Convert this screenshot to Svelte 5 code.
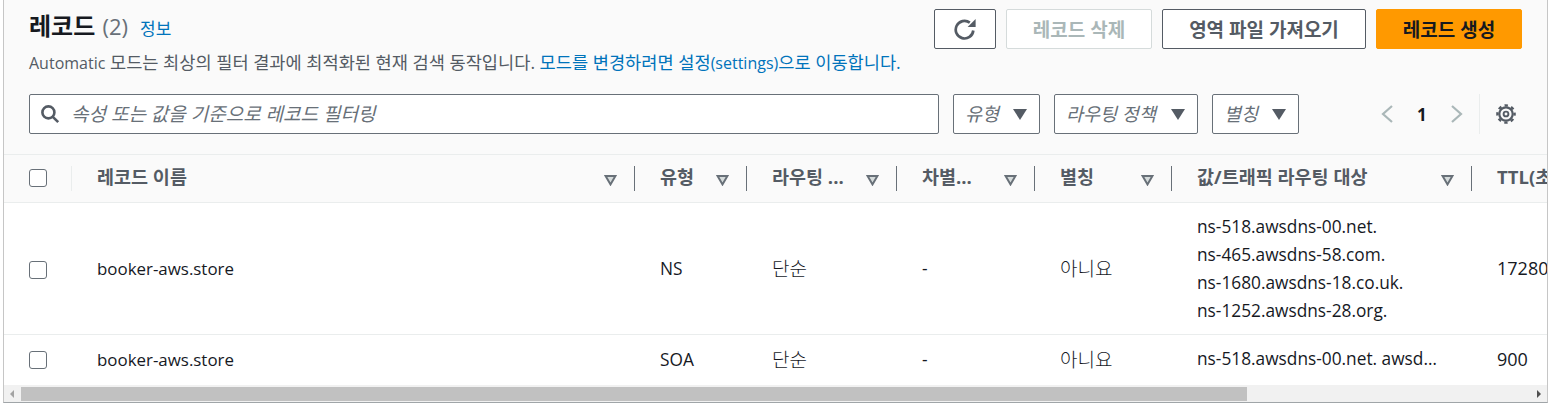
<script lang="ts">
	const filters = [
		{ label: '유형', width: 87 },
		{ label: '라우팅 정책', width: 144 },
		{ label: '별칭', width: 87 }
	];

	const columns = [
		{ label: '레코드 이름', width: 563 },
		{ label: '유형', width: 112 },
		{ label: '라우팅 ...', width: 150 },
		{ label: '차별...', width: 138 },
		{ label: '별칭', width: 137 },
		{ label: '값/트래픽 라우팅 대상', width: 300 },
		{ label: 'TTL(초)', width: 120, noSort: true }
	];

	const records = [
		{
			name: 'booker-aws.store',
			type: 'NS',
			routing: '단순',
			diff: '-',
			alias: '아니요',
			values: ['ns-518.awsdns-00.net.', 'ns-465.awsdns-58.com.', 'ns-1680.awsdns-18.co.uk.', 'ns-1252.awsdns-28.org.'],
			ttl: '172800'
		},
		{
			name: 'booker-aws.store',
			type: 'SOA',
			routing: '단순',
			diff: '-',
			alias: '아니요',
			values: ['ns-518.awsdns-00.net. awsdns-hostmaster.amazon.com. 1 7200 900'],
			ttl: '900'
		}
	];
</script>

<div class="page">
	<div class="panel">
		<header class="head">
			<div class="head-top">
				<div class="title-line">
					<h2>레코드 <span class="count">(2)</span></h2>
					<span class="info">정보</span>
				</div>
				<div class="actions">
					<button class="btn icon-btn" aria-label="새로 고침">
						<svg width="22" height="22" viewBox="0 0 22 22" fill="none" stroke="#545b64" stroke-width="2.7">
							<path d="M15.8 4.6A8.8 8.8 0 1 0 19.3 12.5" />
							<path d="M13.6 9h8V1z" fill="#545b64" stroke="none" />
						</svg>
					</button>
					<button class="btn disabled">레코드 삭제</button>
					<button class="btn import">영역 파일 가져오기</button>
					<button class="btn primary">레코드 생성</button>
				</div>
			</div>
			<p class="desc">
				<span class="lat">Automatic</span> 모드는 최상의 필터 결과에 최적화된 현재 검색 동작입니다. <span class="link">모드를 변경하려면 설정<span class="lat">(settings)</span>으로 이동합니다.</span>
			</p>
			<div class="tools">
				<div class="search">
					<svg width="20" height="20" viewBox="0 0 20 20" fill="none" stroke="#545b64" stroke-width="2.6">
						<circle cx="8.4" cy="8.4" r="6" />
						<path d="M12.8 12.8l5.4 5.4" />
					</svg>
					<span>속성 또는 값을 기준으로 레코드 필터링</span>
				</div>
				<div class="filters">
					{#each filters as f}
						<div class="filter" style="width: {f.width}px">
							<span>{f.label}</span>
							<i class="caret"></i>
						</div>
					{/each}
				</div>
				<div class="pager">
					<svg width="14" height="20" viewBox="0 0 14 20" fill="none" stroke="#aab7b8" stroke-width="2.2"><path d="M12 2L3 10l9 8" /></svg>
					<b>1</b>
					<svg width="14" height="20" viewBox="0 0 14 20" fill="none" stroke="#aab7b8" stroke-width="2.2"><path d="M2 2l9 8-9 8" /></svg>
				</div>
				<div class="prefs">
					<svg width="22" height="22" viewBox="0 0 22 22" fill="none" stroke="#545b64">
						<circle cx="11" cy="11" r="6.7" stroke-width="2.2" />
						<circle cx="11" cy="11" r="2.4" stroke-width="1.9" />
						<circle cx="11" cy="11" r="8.6" stroke-width="2.4" stroke-dasharray="3.35 3.4" stroke-dashoffset="1.67" />
					</svg>
				</div>
			</div>
		</header>

		<div class="table-wrap">
			<table>
				<thead>
					<tr>
						<th class="check-col"><span class="box"></span></th>
						{#each columns as col, i}
							<th style="width: {col.width}px">
								<div class="th-in" class:first={i === 0}>
									<span>{col.label}</span>
									{#if !col.noSort}
										<svg class="sort" width="13" height="11" viewBox="0 0 13 11" fill="#d5dbdb" stroke="#687078" stroke-width="2">
											<path d="M1.6 1h9.8L6.5 9.4z" />
										</svg>
									{/if}
								</div>
							</th>
						{/each}
					</tr>
				</thead>
				<tbody>
					{#each records as r}
						<tr>
							<td class="check-col"><span class="box"></span></td>
							<td class="lat-cell">{r.name}</td>
							<td class="lat-cell type">{r.type}</td>
							<td class="ko-cell">{r.routing}</td>
							<td class="lat-cell">{r.diff}</td>
							<td class="ko-cell">{r.alias}</td>
							<td class="lat-cell values">
								{#each r.values as v}
									<div class="value">{v}</div>
								{/each}
							</td>
							<td class="lat-cell ttl">{r.ttl}</td>
						</tr>
					{/each}
				</tbody>
			</table>
		</div>

		<div class="scrollbar">
			<i class="arrow left"></i>
			<div class="thumb"></div>
			<i class="arrow right"></i>
		</div>
	</div>
</div>

<style>
	:global(body) {
		margin: 0;
		background: #fff;
	}

	.page {
		width: 1561px;
		height: 404px;
		overflow: hidden;
		font-family: 'Open Sans', 'Noto Sans CJK KR', sans-serif;
		color: #16191f;
	}

	.panel {
		width: 1545px;
		height: 403px;
		margin-left: 3px;
		box-sizing: border-box;
		border-left: 1px solid #c6c6c6;
		border-right: 1px solid #c6c6c6;
		border-bottom: 1px solid #a0a5a8;
		background: #fafafa;
		overflow: hidden;
	}

	.head {
		height: 155px;
		box-sizing: border-box;
		padding: 9px 25px 0 25px;
		border-bottom: 1px solid #eaeded;
	}

	.head-top {
		display: flex;
		justify-content: space-between;
		height: 40px;
	}

	.title-line {
		display: flex;
		align-items: baseline;
		gap: 12px;
	}

	h2 {
		margin: 0;
		font-size: 24px;
		font-weight: 700;
		line-height: 34px;
	}

	.count {
		font-weight: 400;
		font-size: 22px;
		margin-left: 1px;
		color: #687078;
	}

	.info {
		font-size: 17px;
		color: #0073bb;
	}

	.actions {
		display: flex;
		gap: 10px;
	}

	.btn {
		height: 40px;
		box-sizing: border-box;
		border: 1px solid #545b64;
		border-radius: 2px;
		background: #fff;
		color: #545b64;
		font: 700 19px 'Open Sans', 'Noto Sans CJK KR', sans-serif;
		padding: 0;
		display: flex;
		align-items: center;
		justify-content: center;
	}

	.icon-btn {
		width: 62px;
	}

	.disabled {
		width: 146px;
		border-color: #d5dbdb;
		color: #aab7b8;
	}

	.import {
		width: 204px;
	}

	.primary {
		width: 146px;
		background: #ff9900;
		border-color: #ff9900;
		color: #16191f;
	}

	.desc {
		margin: 1px 0 0;
		height: 23px;
		font-size: 17.6px;
		line-height: 24px;
		color: #545b64;
		white-space: nowrap;
	}

	.lat {
		font-size: 16px;
	}

	.link {
		color: #0073bb;
	}

	.tools {
		display: flex;
		align-items: center;
		margin-top: 21px;
		height: 40px;
	}

	.search {
		width: 910px;
		height: 40px;
		box-sizing: border-box;
		border: 1px solid #687078;
		border-radius: 2px;
		background: #fff;
		display: flex;
		align-items: center;
		gap: 11px;
		padding: 0 0 2px 10px;
		font-size: 19px;
		font-style: italic;
		color: #687078;
	}

	.search svg {
		margin-top: 2px;
	}

	.filters {
		display: flex;
		gap: 14px;
		margin-left: 14px;
	}

	.filter {
		height: 40px;
		box-sizing: border-box;
		border: 1px solid #687078;
		border-radius: 2px;
		background: #fff;
		display: flex;
		align-items: center;
		justify-content: space-between;
		padding: 0 12px 2px 11px;
		font-size: 18.5px;
		font-style: italic;
		color: #687078;
	}

	.caret {
		width: 0;
		height: 0;
		margin-top: 2px;
		border-left: 7px solid transparent;
		border-right: 7px solid transparent;
		border-top: 11px solid #545b64;
	}

	.pager {
		display: flex;
		align-items: center;
		gap: 23px;
		margin-left: 81px;
		font-size: 17px;
	}

	.pager b {
		font-weight: 700;
	}

	.prefs {
		display: flex;
		align-items: center;
		height: 40px;
		margin-left: 15px;
		padding-left: 15px;
		border-left: 1px solid #eaeded;
	}

	.table-wrap {
		overflow: hidden;
		height: 230px;
		background: #fff;
	}

	table {
		table-layout: fixed;
		border-collapse: collapse;
		width: 1587px;
	}

	th {
		height: 47px;
		box-sizing: border-box;
		padding: 0;
		background: #fafafa;
		border-bottom: 1px solid #eaeded;
		text-align: left;
		font-size: 18.5px;
		font-weight: 700;
		color: #545b64;
	}

	.th-in {
		display: flex;
		align-items: center;
		justify-content: space-between;
		height: 25px;
		box-sizing: border-box;
		padding: 0 17px 5px 25px;
		border-left: 1px solid #687078;
		white-space: nowrap;
	}

	.th-in.first {
		border-left-color: #eaeded;
	}

	.sort {
		flex-shrink: 0;
		margin-top: 9px;
	}

	td {
		padding: 0 0 0 26px;
		border-bottom: 1px solid #eaeded;
		white-space: nowrap;
		overflow: hidden;
		background: #fff;
		box-sizing: border-box;
	}

	.lat-cell {
		font-size: 17.3px;
	}

	.lat-cell:nth-child(2) {
		font-size: 16.9px;
	}

	.ttl {
		font-size: 18px;
	}

	.ko-cell {
		font-size: 19px;
		font-weight: 300;
	}

	tbody tr:first-child td {
		height: 132px;
	}

	tbody tr:first-child td.values {
		padding-top: 2px;
	}

	tbody tr:last-child td {
		height: 50px;
		border-bottom: none;
	}

	th.check-col,
	td.check-col {
		width: 67px;
		padding: 0 0 0 25px;
		box-sizing: border-box;
	}

	tbody tr:first-child td.check-col {
		padding-top: 3px;
	}

	tbody tr:last-child td.check-col {
		padding-top: 2px;
	}

	.box {
		display: block;
		width: 18px;
		height: 18px;
		box-sizing: border-box;
		border: 1px solid #687078;
		border-radius: 3px;
		background: #fff;
	}

	.value {
		line-height: 28px;
		max-width: 243px;
		overflow: hidden;
		text-overflow: ellipsis;
	}

	.scrollbar {
		height: 17px;
		background: #f1f1f1;
		display: flex;
		align-items: center;
	}

	.thumb {
		width: 1226px;
		height: 14px;
		margin-left: 7px;
		background: #c1c1c1;
	}

	.arrow {
		width: 0;
		height: 0;
		border-top: 4px solid transparent;
		border-bottom: 4px solid transparent;
	}

	.arrow.left {
		margin-left: 6px;
		border-right: 4px solid #a3a3a3;
	}

	.arrow.right {
		margin-left: 290px;
		border-left: 4px solid #505050;
	}
</style>
